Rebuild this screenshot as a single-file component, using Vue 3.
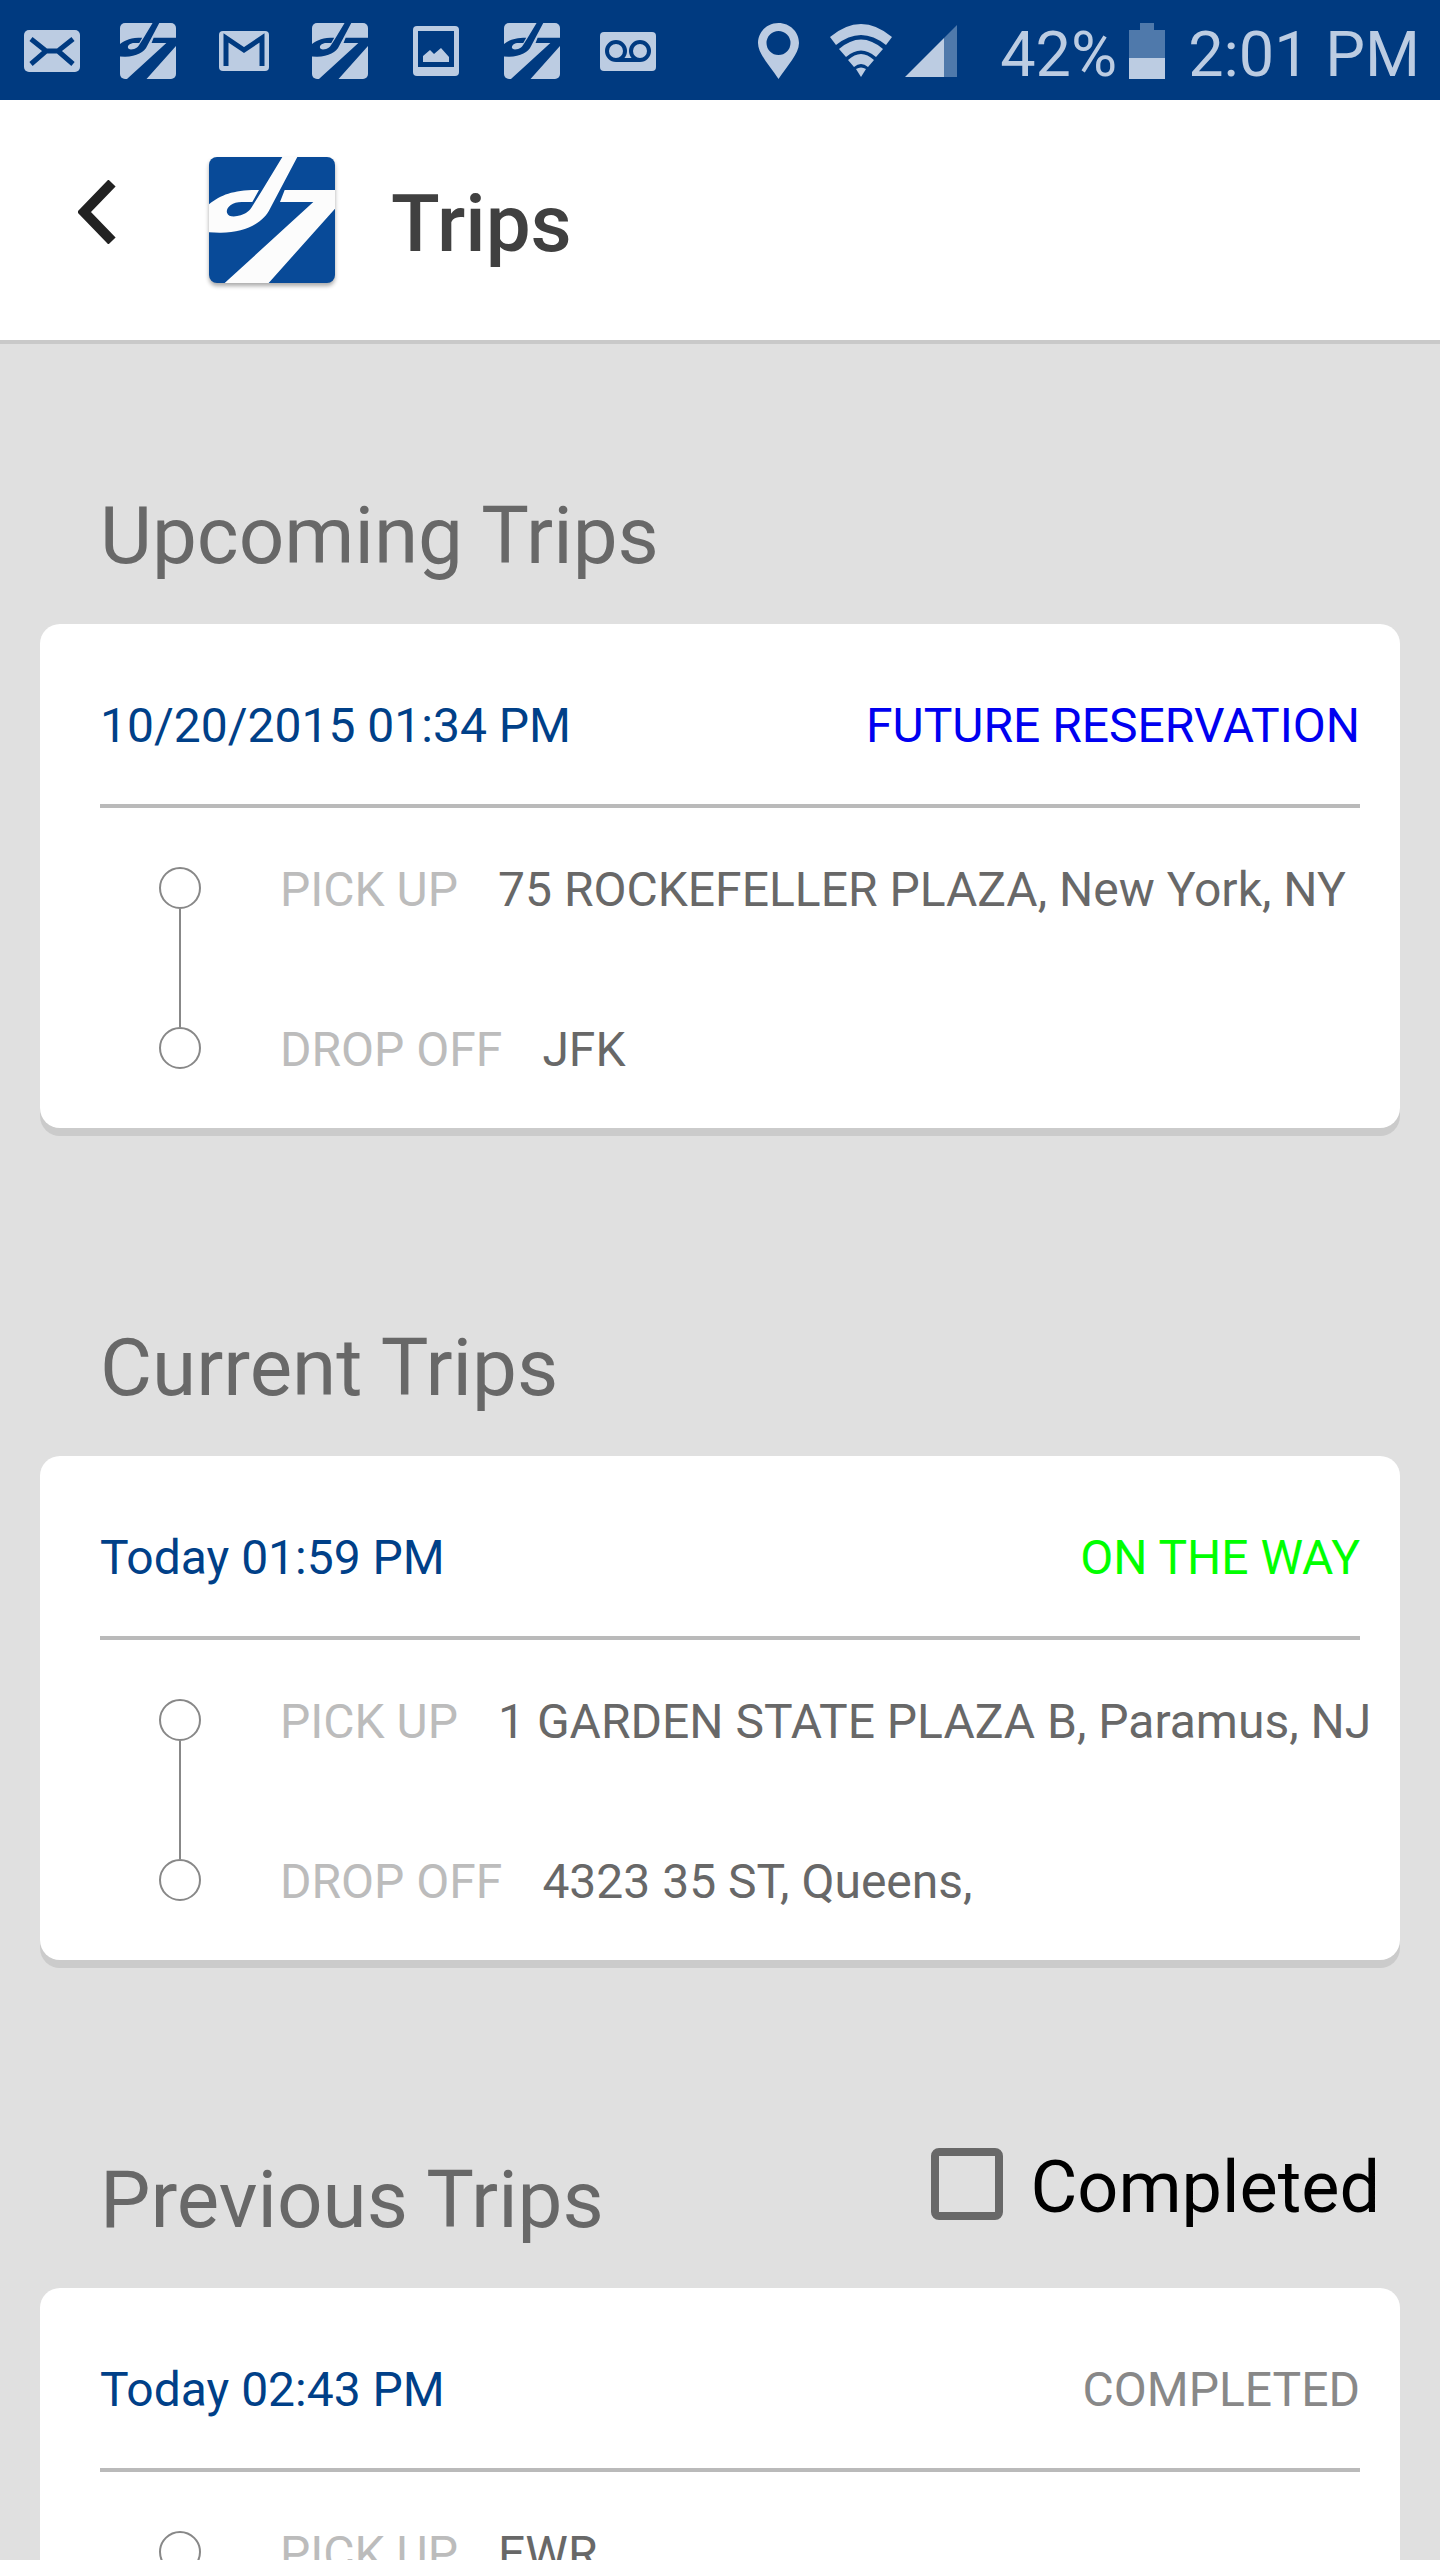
<script setup>
import { ref } from 'vue'

const completedOnly = ref(false)

const notifications = ['mail', 'logo', 'gmail', 'logo', 'picture', 'logo', 'voicemail']

const sections = [
  {
    title: 'Upcoming Trips',
    when: '10/20/2015 01:34 PM',
    status: 'FUTURE RESERVATION',
    tone: 'future',
    stops: [
      { label: 'PICK UP', place: '75 ROCKEFELLER PLAZA, New York, NY' },
      { label: 'DROP OFF', place: 'JFK' },
    ],
  },
  {
    title: 'Current Trips',
    when: 'Today 01:59 PM',
    status: 'ON THE WAY',
    tone: 'active',
    stops: [
      { label: 'PICK UP', place: '1 GARDEN STATE PLAZA B, Paramus, NJ' },
      { label: 'DROP OFF', place: '4323 35 ST, Queens,' },
    ],
  },
  {
    title: 'Previous Trips',
    when: 'Today 02:43 PM',
    status: 'COMPLETED',
    tone: 'done',
    filter: true,
    stops: [{ label: 'PICK UP', place: 'EWR' }],
  },
]
</script>

<template>
  <div class="app">
    <svg class="defs" aria-hidden="true">
      <symbol id="d7" viewBox="0 0 378 378">
        <path d="M0 142C38 112 74 99 150 99L130 135H98C68 135 50 153 54 167C58 181 78 180 95 175C112 170 120 163 128 151L160 99L220 0H265L183 155C165 195 110 228 32 227L0 226ZM227 99H378V155L179 378H47L313 135H213Z" />
      </symbol>
    </svg>

    <div class="status-bar">
      <div class="notifications">
        <svg v-for="(icon, i) in notifications" :key="i" viewBox="0 0 56 56" aria-hidden="true">
          <template v-if="icon === 'mail'">
            <rect class="light" y="7" width="56" height="42" rx="5" />
            <path class="cut" stroke-width="5" d="M7 16L22 28H34L49 16M7 41L22 28M34 28L49 41" />
          </template>
          <template v-else-if="icon === 'gmail'">
            <rect class="light" x="3" y="8" width="50" height="40" rx="4" />
            <path class="cut" stroke-width="5" d="M10 43V15L28 27L46 15V43" />
          </template>
          <template v-else-if="icon === 'picture'">
            <rect class="light" x="5" y="3" width="46" height="50" rx="4" />
            <rect class="dark" x="10" y="8" width="36" height="36" />
            <path class="light" d="M15 39V33L22 27L26 31L33 25L41 34V39Z" />
          </template>
          <template v-else-if="icon === 'voicemail'">
            <rect class="light" y="9" width="56" height="39" rx="4" />
            <circle class="cut" stroke-width="4" cx="16" cy="28" r="9" />
            <circle class="cut" stroke-width="4" cx="40" cy="28" r="9" />
            <path class="cut" stroke-width="4" d="M16 37H40" />
          </template>
          <template v-else>
            <rect class="light" width="56" height="56" rx="5" />
            <use class="dark" href="#d7" width="56" height="56" />
          </template>
        </svg>
      </div>

      <div class="system">
        <svg class="pin" viewBox="0 0 41 56" aria-hidden="true">
          <path class="light" fill-rule="evenodd" d="M20.5 0C9 0 0 9 0 20C0 31 12 43 20.5 56C29 43 41 31 41 20C41 9 32 0 20.5 0ZM20.5 8A12 12 0 1 1 20.5 32A12 12 0 1 1 20.5 8Z" />
        </svg>
        <svg class="wifi" viewBox="0 0 62 54" aria-hidden="true">
          <path class="light" d="M0 13Q31 -13 62 13L56 21Q31 1 6 21ZM9 25Q31 6 53 25L46 33Q31 20 16 33ZM18 36Q31 24 44 36L38 43Q31 37 24 43ZM26 45Q31 42 36 45L31 53Z" />
        </svg>
        <svg class="signal" viewBox="0 0 52 52" aria-hidden="true">
          <path class="dim" d="M39 13L52 0V52H39Z" />
          <path class="light" d="M0 52L39 13V52Z" />
        </svg>
        <span class="percent">42%</span>
        <svg class="battery" viewBox="0 0 36 56" aria-hidden="true">
          <path class="dim" d="M11 0H25V7H36V35H0V7H11Z" />
          <path class="light" d="M0 35H36V56H0Z" />
        </svg>
        <span class="clock">2:01 PM</span>
      </div>
    </div>

    <header class="app-bar">
      <button class="back" type="button" aria-label="Back">
        <svg viewBox="0 0 38 64" aria-hidden="true">
          <path d="M34 3L6 32L34 61" />
        </svg>
      </button>
      <svg class="brand" viewBox="0 0 378 378" aria-hidden="true">
        <use href="#d7" width="378" height="378" />
      </svg>
      <h1>Trips</h1>
    </header>

    <main>
      <section v-for="section in sections" :key="section.title">
        <div class="section-head">
          <h2>{{ section.title }}</h2>
          <label v-if="section.filter" class="filter">
            <input v-model="completedOnly" type="checkbox" />
            <span>Completed</span>
          </label>
        </div>
        <article class="card">
          <div class="card-head">
            <span class="when">{{ section.when }}</span>
            <span :class="section.tone">{{ section.status }}</span>
          </div>
          <div class="route">
            <div class="rail">
              <template v-for="(stop, i) in section.stops" :key="stop.label">
                <i v-if="i" class="line"></i>
                <i class="dot"></i>
              </template>
            </div>
            <dl>
              <div v-for="stop in section.stops" :key="stop.label" class="stop">
                <dt>{{ stop.label }}</dt>
                <dd>{{ stop.place }}</dd>
              </div>
            </dl>
          </div>
        </article>
      </section>
    </main>
  </div>
</template>

<style>
body {
  margin: 0;
  background: #e0e0e0;
}
</style>

<style scoped>
.app {
  display: flex;
  flex-direction: column;
  height: 100vh;
  background: #e0e0e0;
  font-family: Roboto, "Liberation Sans", sans-serif;
}

svg {
  display: block;
  flex: none;
}

.defs {
  position: absolute;
  width: 0;
  height: 0;
}

.light {
  fill: #bccce2;
}

.dim {
  fill: #4f79ab;
}

.dark {
  fill: #003a80;
}

.cut {
  fill: none;
  stroke: #003a80;
}

.status-bar {
  display: flex;
  box-sizing: border-box;
  flex: none;
  align-items: center;
  justify-content: space-between;
  height: 100px;
  padding: 2px 20px 0 24px;
  background: #003a80;
  color: #bccce2;
  font-size: 63px;
  line-height: 76px;
  white-space: nowrap;
}

.notifications {
  display: flex;
  gap: 40px;
}

.notifications svg {
  width: 56px;
  height: 56px;
}

.system {
  display: flex;
  align-items: center;
}

.system span {
  padding-top: 8px;
}

.pin {
  width: 41px;
  height: 56px;
  margin-right: 31px;
}

.wifi {
  width: 62px;
  height: 54px;
  margin-right: 13px;
}

.signal {
  width: 52px;
  height: 52px;
  margin-right: 43px;
}

.battery {
  width: 36px;
  height: 56px;
  margin: 0 23px 0 12px;
}

.app-bar {
  display: flex;
  flex: none;
  align-items: center;
  height: 240px;
  padding-left: 60px;
  border-bottom: 4px solid #c9c9c9;
  background: #fff;
}

.back {
  margin: 0;
  padding: 0 18px 16px;
  border: 0;
  background: none;
}

.back svg {
  width: 38px;
  height: 64px;
}

.back path {
  fill: none;
  stroke: #222;
  stroke-width: 10px;
}

.brand {
  width: 126px;
  height: 126px;
  margin: 0 56px 0 75px;
  border-radius: 8px;
  background: #084a98;
  box-shadow: 0 3px 4px #0005;
  fill: #fcfcfc;
}

h1 {
  margin: 0;
  padding-top: 8px;
  color: #404040;
  font-size: 80px;
  font-weight: 500;
  line-height: 96px;
}

main {
  display: flex;
  flex: 1;
  flex-direction: column;
  gap: 188px;
  min-height: 0;
  padding: 140px 40px 40px;
  overflow: auto;
  scrollbar-width: none;
}

.section-head {
  display: flex;
  align-items: flex-start;
  justify-content: space-between;
  margin-bottom: 40px;
  padding: 0 20px 0 60px;
}

h2 {
  margin: 0;
  padding: 4px 0 0;
  color: #686868;
  font-size: 80px;
  font-weight: 400;
  line-height: 96px;
}

.filter {
  display: flex;
  align-items: flex-start;
  gap: 27px;
  color: #000;
  font-size: 72px;
  line-height: 80px;
}

.filter input {
  box-sizing: border-box;
  width: 72px;
  height: 72px;
  margin: 0;
  border: 8px solid #686868;
  border-radius: 8px;
  appearance: none;
}

.filter input:checked {
  background: #686868;
}

.card {
  padding: 0 40px 0 60px;
  border-radius: 20px;
  background: #fff;
  box-shadow: 0 8px 0 #cbcbcb;
  color: #686868;
  font-size: 48px;
  line-height: 56px;
  white-space: nowrap;
}

.card-head {
  display: flex;
  justify-content: space-between;
  padding: 74px 0 50px;
  border-bottom: 4px solid #bababa;
}

.when {
  color: #004088;
}

.future {
  color: #0000f0;
}

.active {
  color: #00ff00;
}

.done {
  color: #888;
}

.route {
  display: flex;
  gap: 79px;
  padding: 54px 0 50px 59px;
}

.rail {
  display: flex;
  flex: none;
  flex-direction: column;
  align-items: center;
  padding: 5px 0 9px;
}

.dot {
  box-sizing: border-box;
  width: 42px;
  height: 42px;
  border: 2px solid #888;
  border-radius: 50%;
}

.line {
  flex: 1;
  width: 2px;
  background: #888;
}

dl {
  display: flex;
  flex-direction: column;
  gap: 104px;
  margin: 0;
}

.stop {
  display: flex;
  gap: 40px;
}

dt {
  color: #bcbcbc;
}

dd {
  margin: 0;
}
</style>
